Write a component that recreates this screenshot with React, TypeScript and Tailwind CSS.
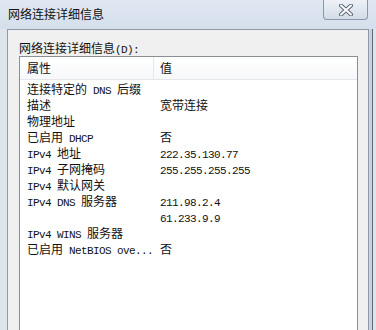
import React from "react";

const rows: [string, string][] = [
  ["连接特定的 DNS 后缀", ""],
  ["描述", "宽带连接"],
  ["物理地址", ""],
  ["已启用 DHCP", "否"],
  ["IPv4 地址", "222.35.130.77"],
  ["IPv4 子网掩码", "255.255.255.255"],
  ["IPv4 默认网关", ""],
  ["IPv4 DNS 服务器", "211.98.2.4"],
  ["", "61.233.9.9"],
  ["IPv4 WINS 服务器", ""],
  ["已启用 NetBIOS ove...", "否"],
];

const cjk = "font-['Noto_Sans_CJK_SC',sans-serif]";

// ascii runs get the narrow mono face, like the half-width glyphs of SimSun
function Mixed({ text }: { text: string }) {
  const parts = text.split(/([\x20-\x7e]+)/).filter(Boolean);
  return (
    <>
      {parts.map((p, i) =>
        /^[\x20-\x7e]+$/.test(p) ? (
          <span key={i} className="font-['Liberation_Mono',monospace] text-[11px] leading-[16px] tracking-[-0.6px] whitespace-pre">
            {p}
          </span>
        ) : (
          <span key={i}>{p}</span>
        )
      )}
    </>
  );
}

export default function App() {
  return (
    <div className="w-[376px] h-[330px] flex flex-col bg-[#dbe3ed] overflow-hidden text-[#111]">
      <div className="h-[29px] flex items-start justify-between shrink-0 bg-gradient-to-b from-[#dfe8f3] to-[#d5dfeb]">
        <div className={`${cjk} text-[12px] leading-[16px] pl-[8px] pt-[6px]`}>网络连接详细信息</div>
        <div className="w-[45px] h-[20px] mr-[8px] flex items-center justify-center rounded-b-[4px] border border-t-0 border-[#8997a9] bg-gradient-to-b from-[#eef2f7] to-[#d3dce7]">
          <XGlyph />
        </div>
      </div>
      <div className="flex-1 flex min-h-0">
        <div className="w-[7px] shrink-0 bg-[#dde4ec]" />
        <div className="flex-1 flex flex-col border border-b-0 border-[#8e9aa9] bg-[#f0f0f0] pl-[11px] pr-[10px] pt-[10px] min-w-0">
          <div className={`${cjk} text-[12px] leading-[16px] h-[16px]`}>
            网络连接详细信息<Mixed text="(D):" />
          </div>
          <div className="flex-1 flex flex-col border border-b-0 border-[#8a8f96] bg-white">
            <div className={`${cjk} flex h-[23px] shrink-0 border-b border-[#e3e6ea] bg-gradient-to-b from-white to-[#f7f8fa] text-[12px]`}>
              <div className="w-[134px] flex items-center pl-[7px] border-r border-[#e3e6ea]">属性</div>
              <div className="flex items-center pl-[6px]">值</div>
            </div>
            <div className={`${cjk} text-[12px] leading-[16px] pt-[1px]`}>
              {rows.map(([name, value], i) => (
                <div key={i} className="flex h-[16px] items-center">
                  <div className="w-[140px] h-[16px] pl-[7px] whitespace-nowrap">
                    <Mixed text={name} />
                  </div>
                  <div className="h-[16px] whitespace-nowrap">
                    <Mixed text={value} />
                  </div>
                </div>
              ))}
            </div>
          </div>
        </div>
        <div className="w-[7px] shrink-0 flex">
          <div className="w-[3px] bg-[#c9d3e0]" />
          <div className="w-[1px] bg-[#5d6876]" />
          <div className="flex-1 bg-[#dde4ec]" />
        </div>
      </div>
    </div>
  );
}

function XGlyph() {
  return (
    <svg width="16" height="12" viewBox="0 0 16 12" aria-hidden="true">
      <path d="M3 1.5l10 9M13 1.5l-10 9" stroke="#5a6675" strokeWidth={4} strokeLinecap="round" />
      <path d="M3 1.5l10 9M13 1.5l-10 9" stroke="#ffffff" strokeWidth={2} strokeLinecap="round" />
    </svg>
  );
}
